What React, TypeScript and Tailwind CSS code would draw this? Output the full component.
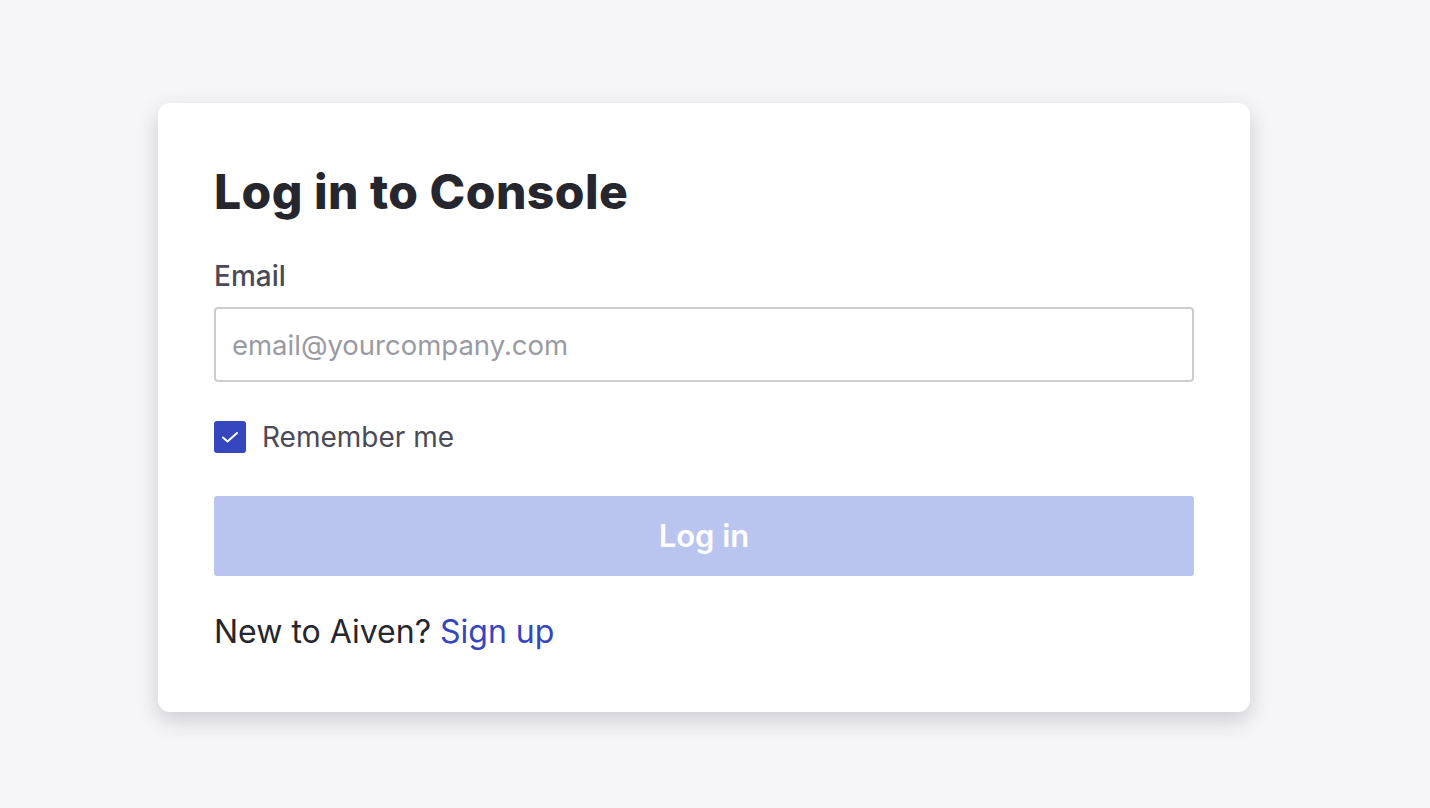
export default function App() {
  return (
    <div
      className="min-h-[808px] w-full bg-[#f6f6f8] pt-[103px] pl-[158px]"
      style={{ fontFamily: "Inter, 'Liberation Sans', sans-serif" }}
    >
      <div className="w-[1092px] h-[609px] rounded-[12px] bg-white px-[56px] pt-[60px] shadow-[0_8px_22px_rgba(40,40,60,0.2)]">
        <h1 className="text-[48px] leading-[58px] font-extrabold tracking-[0.01em] text-[#26262e]">
          Log in to Console
        </h1>

        {/* Email field */}
        <label className="mt-[38px] block text-[28px] leading-[34px] font-medium text-[#4a4a58]">
          Email
        </label>
        <input
          type="email"
          placeholder="email@yourcompany.com"
          className="mt-[14px] block h-[75px] w-full rounded-[4px] border-2 border-[#cdcdd1] bg-white px-[16px] text-[27.5px] text-[#26262e] placeholder:text-[#9a9aa3] outline-none"
        />

        {/* Remember me */}
        <div className="mt-[38px] flex items-center gap-[16px]">
          <div className="flex h-[32px] w-[32px] shrink-0 items-center justify-center rounded-[3px] bg-[#3546bf]">
            <svg width="18" height="18" viewBox="0 0 18 18" fill="none" stroke="white" strokeWidth="2" strokeLinecap="round" strokeLinejoin="round">
              <path d="M2 9.5l4.5 4L16 5" />
            </svg>
          </div>
          <span className="text-[28px] leading-[34px] text-[#4a4a58]">Remember me</span>
        </div>

        {/* Submit */}
        <button className="mt-[42px] flex h-[80px] w-full items-center justify-center rounded-[3px] bg-[#b9c5ef] text-[31px] font-semibold text-white">
          Log in
        </button>

        <p className="mt-[36px] text-[32px] leading-[40px] text-[#26262e]">
          New to Aiven? <a href="#" className="text-[#3545c1]">Sign up</a>
        </p>
      </div>
    </div>
  );
}
